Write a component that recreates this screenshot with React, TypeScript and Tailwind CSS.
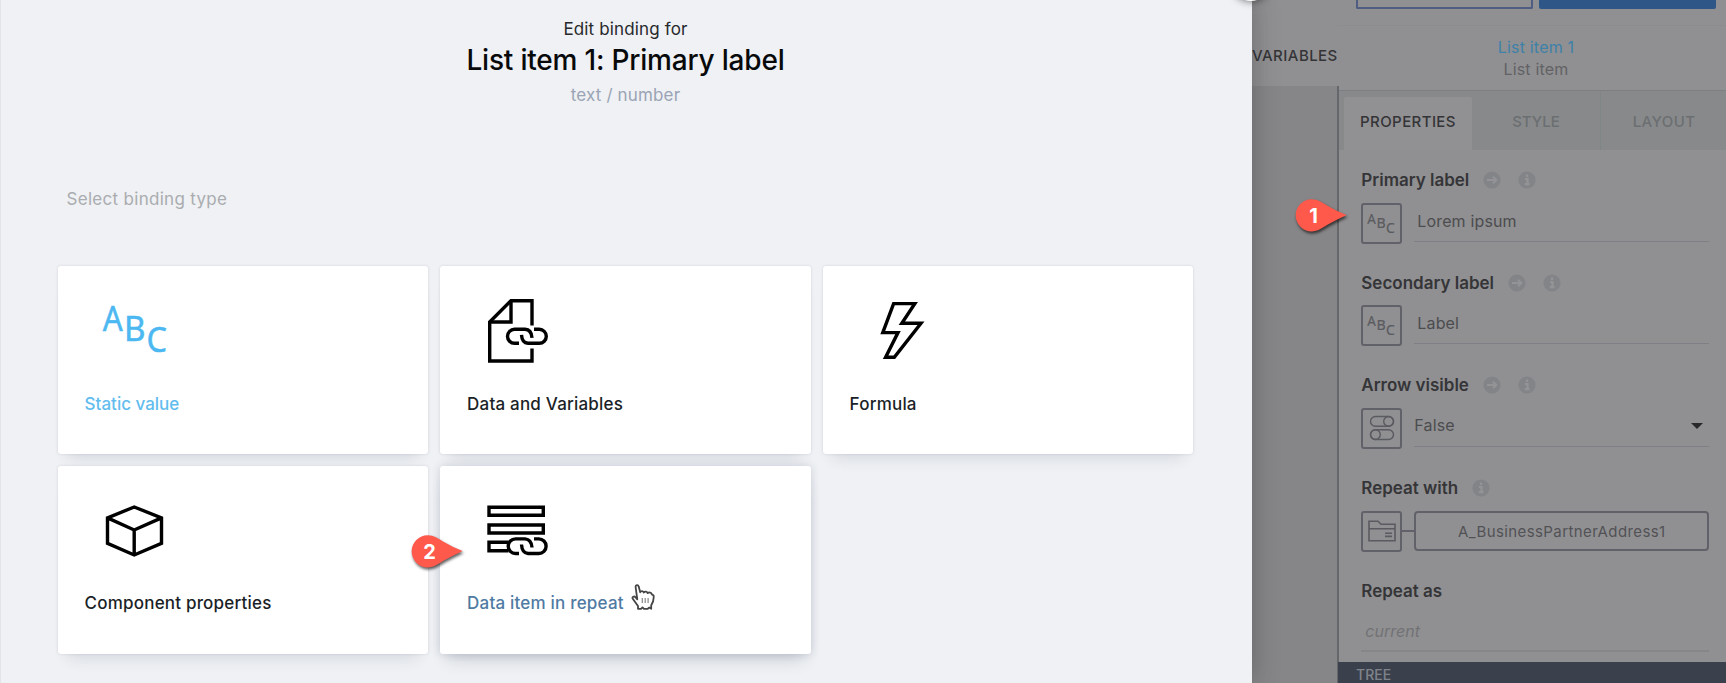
import React from "react";

type IconProps = { className?: string };

const strokeProps = {
  fill: "none",
  stroke: "currentColor",
  strokeWidth: 3.4,
  strokeLinecap: "butt" as const,
};

function AbcIcon({ className = "" }: IconProps) {
  return (
    <svg viewBox="0 0 68 68" fill="currentColor" stroke="currentColor" strokeWidth="0.5" className={`font-['Noto_Sans',sans-serif] text-[34px] ${className}`}>
      <text x="0.8" y="34.5" textLength="20" lengthAdjust="spacingAndGlyphs">A</text>
      <text x="22" y="45.3" textLength="21.5" lengthAdjust="spacingAndGlyphs">B</text>
      <text x="44.5" y="55.5" textLength="20.5" lengthAdjust="spacingAndGlyphs">C</text>
    </svg>
  );
}

function DocumentLinkIcon({ className = "" }: IconProps) {
  return (
    <svg viewBox="0 0 68 68" {...strokeProps} className={className}>
      <path d="M48 29.5V4.7H27L5.7 26V65H48V52.5" />
      <path d="M27 4.7V26H5.7" />
      <path d="M35 47.3H30.5A7 7 0 0 1 30.5 33.3H41Q47.5 33.8 48 41.8" />
      <path d="M37.5 38.8Q38 46.8 44 47.3H55.3A7 7 0 0 0 55.3 33.3H50" />
    </svg>
  );
}

function BoltIcon({ className = "" }: IconProps) {
  return (
    <svg viewBox="0 0 68 68" {...strokeProps} className={className}>
      <path d="M26.6 7.6H47.8L34.8 27.3H54L27.3 61.3H18.6L31 36.6H15.8Z" />
    </svg>
  );
}

function CubeIcon({ className = "" }: IconProps) {
  return (
    <svg viewBox="0 0 68 68" {...strokeProps} className={className}>
      <path d="M32.2 11L59.5 21.9V47.3L32.2 59L5.5 47.3V21.9ZM5.5 21.9L32.2 34L59.5 21.9M32.2 34V59" />
    </svg>
  );
}

function ListLinkIcon({ className = "" }: IconProps) {
  return (
    <svg viewBox="0 0 68 68" {...strokeProps} className={className}>
      <path d="M5 11.3H59.3V19.3H5ZM5 29H59.3V37H5ZM24.5 46.3H5V54.7H24.5" />
      <path d="M35 57.5H31.5A7.3 7.3 0 0 1 31.5 42.9H41Q47.5 43.5 48 51.5" />
      <path d="M37.5 48.5Q38 57 44 57.5H54.8A7.3 7.3 0 0 0 54.8 42.9H50" />
    </svg>
  );
}

function TogglesIcon() {
  return (
    <svg viewBox="0 0 26 26" className="size-[26px]" fill="none" stroke="currentColor" strokeWidth="1.4">
      <rect x="1.5" y="1.5" width="23" height="9.8" rx="4.9" />
      <circle cx="19.6" cy="6.4" r="4.9" />
      <rect x="1.5" y="14.7" width="23" height="9.8" rx="4.9" />
      <circle cx="6.4" cy="19.6" r="4.9" />
    </svg>
  );
}

function FolderIcon() {
  return (
    <svg viewBox="0 0 28 22" className="h-[22px] w-[28px]" fill="none" stroke="currentColor" strokeWidth="1.6">
      <path d="M1 20.8V1.2H10L13 4.2H27V20.8ZM1 8.8H27M17 13.2H24M17 16.4H24" />
    </svg>
  );
}

function ArrowBadge() {
  return (
    <svg viewBox="0 0 18 18" className="size-[18px]">
      <circle cx="9" cy="9" r="8.6" fill="#828487" />
      <path d="M4 9H13M10 5.8L13.2 9L10 12.2" fill="none" stroke="#949496" strokeWidth="2.1" />
    </svg>
  );
}

function InfoBadge() {
  return (
    <svg viewBox="0 0 18 18" className="size-[18px]">
      <circle cx="9" cy="9" r="8.6" fill="#828487" />
      <path d="M9 3.4V6M7 8H9.5V13.2M6.8 13.2H11.5" fill="none" stroke="#949496" strokeWidth="2.2" />
    </svg>
  );
}

function HandCursor({ className = "" }: IconProps) {
  return (
    <svg viewBox="0 0 24 26" className={className} fill="#fff" stroke="#444" strokeWidth="1.8" strokeLinejoin="round">
      <path d="M7 24.8V22L1.6 14.5C1 12.8 3 12 4.2 13L6.3 15.3L4.6 3C4.4 .8 7.2 .5 7.7 2.6L9.2 8.3C9.8 6.6 12.4 6.8 12.8 8.6C13.8 7 16.2 7.4 16.7 9.2C18 7.8 20.4 8.6 20.8 10.2L22.6 11.5C23.2 16 21.6 19 20.2 21.2V24.8L18.3 23.6L16.5 24.9H13L11.5 23.4L10 24.9Z" />
      <path d="M11.3 14V19M14.2 14V19M17.1 14V19" strokeWidth="1.2" stroke="#888" />
    </svg>
  );
}

function Marker({ n, className = "" }: { n: number; className?: string }) {
  return (
    <div className={`absolute h-[33px] w-[52px] ${className}`}>
      <svg viewBox="0 0 52 33" className="absolute inset-0 size-full overflow-visible drop-shadow-[1px_2px_1.5px_rgba(0,0,0,0.65)]">
        <path d="M16.7 .3C23 .3 27 3.4 32 6.6Q41 12 51.6 16Q42 20.5 32 26C27 29 23 32.4 16.7 32.4A16.05 16.05 0 0 1 16.7 .3Z" fill="#ff594c" />
      </svg>
      <span className="absolute left-0 top-0 w-[38px] text-center text-[20px] font-bold leading-[34px] text-white">{n}</span>
    </div>
  );
}

type CardProps = {
  label: string;
  Icon: (p: IconProps) => React.ReactElement;
  tone?: string;
  iconTone?: string;
  hovered?: boolean;
};

function BindingCard({ label, Icon, tone = "text-[#1b1f27] tracking-[0.2px]", iconTone = "text-black", hovered }: CardProps) {
  const shadow = hovered
    ? "z-10 shadow-[0_0_8px_rgba(60,70,110,0.2),0_12px_16px_-8px_rgba(60,75,90,0.24)]"
    : "shadow-[0_0_3px_rgba(60,70,110,0.16),0_14px_14px_-10px_rgba(60,70,90,0.14)]";
  return (
    <div className={`relative flex h-[188px] flex-col rounded-[3px] bg-white pl-[27px] pt-[30px] ${shadow}`}>
      <Icon className={`ml-[17px] size-[68px] shrink-0 ${iconTone}`} />
      <div className={`mt-[27.5px] text-[17px] font-medium leading-6 ${tone}`}>{label}</div>
    </div>
  );
}

function FieldBox({ children }: { children: React.ReactNode }) {
  return (
    <div className="flex size-[41px] shrink-0 items-center justify-center rounded-[3px] border-2 border-[#616269] text-[#5a5b60]">
      {children}
    </div>
  );
}

function Field({ label, arrow, info = true, children }: { label: string; arrow?: boolean; info?: boolean; children: React.ReactNode }) {
  return (
    <div className="h-[102.7px]">
      <div className="flex h-6 items-center text-[17px] font-semibold leading-6 text-[#353538]">
        <span className="mr-[14px]">{label}</span>
        {arrow && <span className="mr-[17px]"><ArrowBadge /></span>}
        {info && <InfoBadge />}
      </div>
      <div className="mt-[10.5px] flex">{children}</div>
    </div>
  );
}

function TextValue({ value }: { value: string }) {
  return (
    <>
      <FieldBox>
        <AbcIcon className="size-[29px]" />
      </FieldBox>
      <div className="ml-[12px] h-[39px] w-[295px] border-b border-[#7f8085] pl-[3px] text-[16px] leading-[37px] tracking-[0.15px] text-[#4c4c4f]">
        {value}
      </div>
    </>
  );
}

export default function App() {
  return (
    <div className="relative flex h-[683px] w-full overflow-hidden bg-[#909092] font-['Inter',sans-serif]">
      <main className="relative z-10 h-full w-[1252px] shrink-0 border-l border-[#e2e4e8] bg-[#eff1f4] shadow-[0_0_24px_rgba(40,40,50,0.35)]">
        <header className="pr-[2px] pt-[17px] text-center">
          <div className="text-[17px] leading-6 tracking-[0.15px] text-[#26282c]">Edit binding for</div>
          <h1 className="mt-px text-[28px] font-medium leading-9 tracking-[-0.2px] text-[#08090b]">List item 1: Primary label</h1>
          <div className="mt-[5px] text-[17px] leading-6 tracking-[0.15px] text-[#9aa4b5]">text / number</div>
        </header>
        <div className="mt-[79.5px] pl-[65.5px] text-[17px] leading-6 tracking-[0.3px] text-[#aaacb0]">Select binding type</div>
        <section className="ml-[56.6px] mt-[55.8px] grid w-[1135.5px] grid-cols-3 gap-x-[12px] gap-y-[11.7px]">
          <BindingCard label="Static value" Icon={AbcIcon} tone="text-[#62bdee]" iconTone="text-[#4cb8f1]" />
          <BindingCard label="Data and Variables" Icon={DocumentLinkIcon} />
          <BindingCard label="Formula" Icon={BoltIcon} />
          <BindingCard label="Component properties" Icon={CubeIcon} />
          <BindingCard label="Data item in repeat" Icon={ListLinkIcon} tone="text-[#4f7aa3] tracking-[0.2px]" hovered />
        </section>
        <HandCursor className="absolute left-[630px] top-[584px] z-20 h-[26px] w-[24px]" />
        <Marker n={2} className="left-[409.5px] top-[535px] z-20" />
      </main>

      <div className="flex h-full w-[84.5px] shrink-0 flex-col">
        <div className="h-[86px] pt-[43.5px] text-[15px] font-medium leading-6 tracking-[0.45px] text-[#343437]">VARIABLES</div>
        <div className="flex-1 bg-[#868688]" />
      </div>

      <aside className="flex h-full w-[398px] shrink-0 flex-col">
        <div className="flex h-[26px] shrink-0 gap-[6px] border-b border-[#8c8c8e] pl-[19.5px]">
          <div className="h-[9px] w-[177px] rounded-b-[2px] border-2 border-t-0 border-[#4f5d83]" />
          <div className="h-[9px] w-[177px] rounded-b-[2px] bg-[#2e5788]" />
        </div>
        <div className="h-[60px] shrink-0 pl-px pt-[10px] text-center text-[16px] leading-[22px]">
          <div className="tracking-[0.2px] text-[#3d81a9]">List item 1</div>
          <div className="tracking-[0.2px] text-[#626265]">List item</div>
        </div>
        <div className="flex min-h-0 flex-1 flex-col border-l-2 border-[#66676b]">
          <div className="mt-[4px] flex h-[59.5px] shrink-0 border-t border-[#7d7e82] bg-[#88898b] pl-[5.5px] text-center text-[15px] font-medium leading-[62px] tracking-[0.4px]">
            <div className="mt-[6px] w-[128px] rounded-t-[2px] bg-[#919193] leading-[50px] text-[#343437]">PROPERTIES</div>
            <div className="w-[129px] border-r border-[#808688] tracking-[0px] text-[#6b6f71]">STYLE</div>
            <div className="w-[126px] text-[#6b6f71]">LAYOUT</div>
          </div>
          <div className="min-h-0 flex-1 pl-[22.8px] pt-[18.5px]">
            <Field label="Primary label" arrow>
              <TextValue value="Lorem ipsum" />
            </Field>
            <Field label="Secondary label" arrow>
              <TextValue value="Label" />
            </Field>
            <Field label="Arrow visible" arrow>
              <FieldBox>
                <TogglesIcon />
              </FieldBox>
              <div className="ml-[12px] flex h-[39px] w-[295px] items-center justify-between border-b border-[#7f8085] pr-[6px] text-[16px] tracking-[0.15px] text-[#4c4c4f]">
                <span className="pb-[3px]">False</span>
                <svg viewBox="0 0 12 6" className="mb-[2px] h-[6px] w-[12px]">
                  <path d="M0 0H12L6 6Z" fill="#28282a" />
                </svg>
              </div>
            </Field>
            <Field label="Repeat with">
              <FieldBox>
                <FolderIcon />
              </FieldBox>
              <div className="mt-[19px] h-[2px] w-[12px] bg-[#616269]" />
              <div className="h-[40px] w-[295px] rounded-[4px] border-2 border-[#616269] text-center text-[15px] leading-[37px] tracking-[0.4px] text-[#525256]">
                A_BusinessPartnerAddress1
              </div>
            </Field>
            <div className="text-[17px] font-semibold leading-6 text-[#353538]">Repeat as</div>
            <div className="mt-[14px] h-[35px] w-[348px] border-b-2 border-[#86868a] pl-[4px] pt-[2px] text-[16px] italic leading-6 text-[#727275]">current</div>
          </div>
          <div className="-ml-px h-[21px] shrink-0 bg-[#3b414c] pl-[18.5px] text-[14px] font-medium leading-[26px] text-[#7f848b]">TREE</div>
        </div>
      </aside>

      <div className="absolute left-[1232px] top-[-37px] z-20 size-[38px] rounded-full bg-white shadow-[0_0_8px_rgba(0,0,0,0.6)]" />
      <Marker n={1} className="left-[1294.5px] top-[199px] z-20" />
    </div>
  );
}
